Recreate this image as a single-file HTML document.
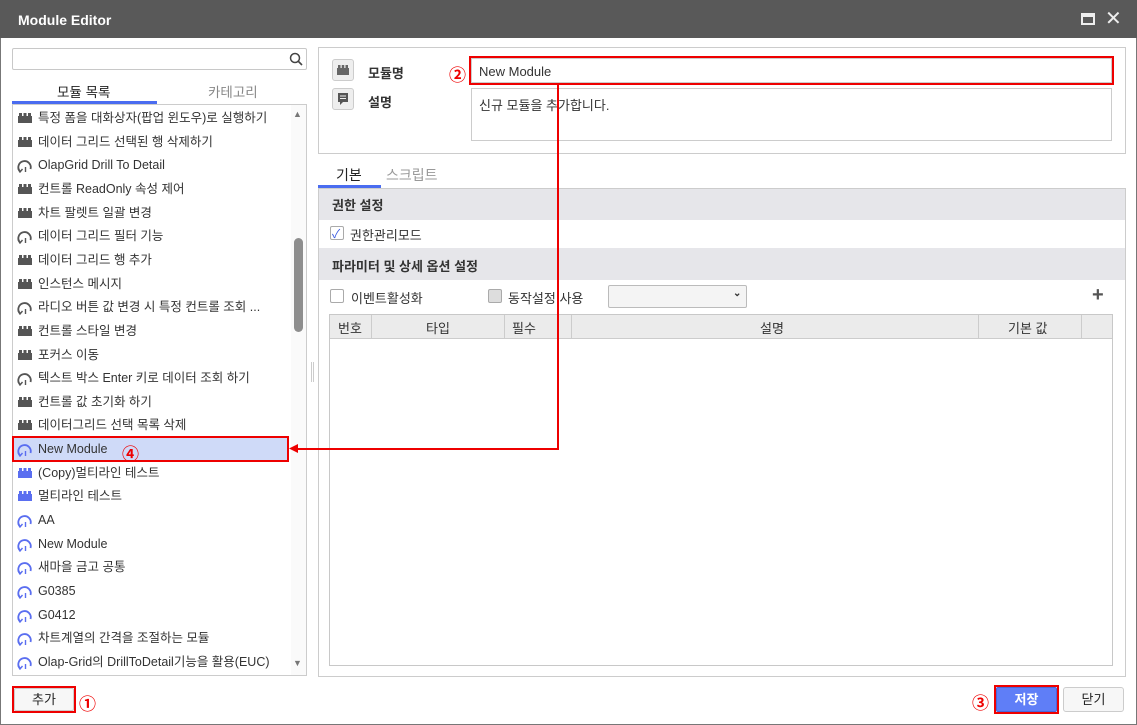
<!DOCTYPE html>
<html><head><meta charset="utf-8"><style>
*{box-sizing:border-box;margin:0;padding:0}
body{width:1137px;height:725px;background:#fff;font-family:"Liberation Sans","Noto Sans CJK KR",sans-serif;font-size:13px;color:#333;position:relative;overflow:hidden}
.a{position:absolute}
.win{left:0;top:0;width:1137px;height:725px;border:1px solid #777;border-top:none}
.title{left:0;top:0;width:1137px;height:38px;background:#595959;color:#fff;font-weight:bold;font-size:14px;padding:12px 0 0 18px}
.row{position:absolute;left:14px;height:23px;width:276px;line-height:23px;white-space:nowrap;font-size:12.5px;color:#333}
.row svg{position:absolute;left:3px;top:5px}
.row span{position:absolute;left:24px}
.red{border:2px solid #e00}
.circ{color:#e00;font-weight:bold;font-size:17px}
.hdr{background:#e6e6ea;font-weight:bold;font-size:13px;color:#333}
.cb{width:14px;height:14px;border:1px solid #aaa;border-radius:2px;background:#fff}
</style></head><body>
<div class="a win"></div>
<div class="a title">Module Editor</div>
<div class="a" style="left:1081px;top:13px;width:14px;height:12px;border:2px solid #eee;border-top-width:4px"></div>
<div class="a" style="left:1105px;top:6px;color:#eee;font-size:20px">✕</div>

<div class="a" style="left:12px;top:48px;width:295px;height:22px;border:1px solid #c8c8c8;border-radius:2px"></div>
<svg class="a" style="left:288px;top:51px" width="16" height="16"><circle cx="7" cy="7" r="4.5" stroke="#444" stroke-width="1.5" fill="none"/><path d="M10 10l4 4" stroke="#444" stroke-width="1.6"/></svg>
<div class="a" style="left:57px;top:81px;font-size:13.5px;color:#222">모듈 목록</div>
<div class="a" style="left:208px;top:81px;font-size:13.5px;color:#888">카테고리</div>
<div class="a" style="left:12px;top:101px;width:145px;height:3px;background:#4a6cf0"></div>
<div class="a" style="left:12px;top:104px;width:295px;height:572px;border:1px solid #ccc"></div>
<div class="a" style="left:291px;top:105px;width:15px;height:570px;background:#fafafa"></div>
<div class="a" style="left:294px;top:238px;width:9px;height:94px;background:#8e8e8e;border-radius:5px"></div>
<div class="a" style="left:293px;top:109px;color:#777;font-size:9px">▲</div>
<div class="a" style="left:293px;top:658px;color:#777;font-size:9px">▼</div>
<div class="a" style="left:311px;top:362px;width:3px;height:20px;border-left:1px solid #ccc;border-right:1px solid #ccc"></div>

<div class="a red" style="left:12px;top:436px;width:277px;height:26px;background:#cfdaf8"></div>
<div id="list"></div>

<div class="a red" style="left:12px;top:686px;width:64px;height:27px"></div>
<div class="a" style="left:14px;top:688px;width:60px;height:23px;border:1px solid #ccc;border-radius:2px;background:#f7f7f7;text-align:center;line-height:21px;font-size:13px;color:#222">추가</div>
<div class="a circ" style="left:79px;top:690px">①</div>

<div class="a" style="left:318px;top:47px;width:808px;height:107px;border:1px solid #ccc"></div>
<div class="a" style="left:332px;top:59px;width:22px;height:22px;background:#eee;border:1px solid #ccc;border-radius:3px"></div>
<svg class="a" style="left:336px;top:64px" width="14" height="11"><path d="M1 4h12v7H1zM2 1h2.5v3H2zM5.75 1h2.5v3h-2.5zM9.5 1h2.5v3H9.5z" fill="#666"/></svg>
<div class="a" style="left:332px;top:88px;width:22px;height:22px;background:#eee;border:1px solid #ccc;border-radius:3px"></div>
<svg class="a" style="left:337px;top:92px" width="12" height="13"><path d="M1 1h10v9H6l-3 3v-3H1z" fill="#555"/><path d="M3 4h6M3 6.5h6" stroke="#eee" stroke-width="1"/></svg>
<div class="a" style="left:368px;top:63px;font-weight:bold;font-size:13px">모듈명</div>
<div class="a" style="left:368px;top:92px;font-weight:bold;font-size:13px">설명</div>
<div class="a circ" style="left:449px;top:61px">②</div>
<div class="a red" style="left:469px;top:56px;width:645px;height:29px"></div>
<div class="a" style="left:471px;top:58px;width:641px;height:25px;border:1px solid #ccc;padding:5px 7px;font-size:13px">New Module</div>
<div class="a" style="left:471px;top:88px;width:641px;height:53px;border:1px solid #ccc;padding:6px 7px;font-size:13px">신규 모듈을 추가합니다.</div>

<div class="a" style="left:336px;top:165px;font-size:14px;color:#222">기본</div>
<div class="a" style="left:386px;top:165px;font-size:14px;color:#999">스크립트</div>
<div class="a" style="left:318px;top:185px;width:63px;height:3px;background:#4a6cf0"></div>
<div class="a" style="left:318px;top:188px;width:808px;height:489px;border:1px solid #ccc"></div>
<div class="a hdr" style="left:319px;top:189px;width:806px;height:31px;padding:6px 0 0 13px">권한 설정</div>
<div class="a cb" style="left:330px;top:226px"></div>
<div class="a" style="left:332px;top:225px;color:#3a5be0;font-size:12px">✓</div>
<div class="a" style="left:350px;top:225px;font-size:13px">권한관리모드</div>
<div class="a hdr" style="left:319px;top:248px;width:806px;height:32px;padding:8px 0 0 13px">파라미터 및 상세 옵션 설정</div>
<div class="a cb" style="left:330px;top:289px"></div>
<div class="a" style="left:351px;top:288px;font-size:13px">이벤트활성화</div>
<div class="a cb" style="left:488px;top:289px;background:#ddd"></div>
<div class="a" style="left:508px;top:288px;font-size:13px">동작설정 사용</div>
<div class="a" style="left:608px;top:285px;width:139px;height:23px;border:1px solid #bbb;border-radius:2px;background:#f4f4f4"></div>
<div class="a" style="left:733px;top:288px;font-size:10px;font-weight:bold">⌄</div>
<div class="a" style="left:1092px;top:284px;font-size:20px;color:#555;font-weight:bold">+</div>
<div class="a" style="left:329px;top:314px;width:784px;height:352px;border:1px solid #c8c8c8"></div>
<div class="a" style="left:330px;top:315px;width:782px;height:24px;background:#ebebeb;border-bottom:1px solid #ccc"></div>
<div class="a" style="left:371px;top:315px;width:1px;height:24px;background:#ccc"></div>
<div class="a" style="left:504px;top:315px;width:1px;height:24px;background:#ccc"></div>
<div class="a" style="left:571px;top:315px;width:1px;height:24px;background:#ccc"></div>
<div class="a" style="left:978px;top:315px;width:1px;height:24px;background:#ccc"></div>
<div class="a" style="left:1081px;top:315px;width:1px;height:24px;background:#ccc"></div>
<div class="a" style="left:338px;top:318px;font-size:13px">번호</div>
<div class="a" style="left:426px;top:318px;font-size:13px">타입</div>
<div class="a" style="left:512px;top:318px;font-size:13px">필수</div>
<div class="a" style="left:760px;top:318px;font-size:13px">설명</div>
<div class="a" style="left:1008px;top:318px;font-size:13px">기본 값</div>

<div class="a" style="left:557px;top:85px;width:2px;height:365px;background:#e00"></div>
<div class="a" style="left:296px;top:448px;width:263px;height:2px;background:#e00"></div>
<svg class="a" style="left:289px;top:444px" width="9" height="9"><path d="M0 4.5L9 0v9z" fill="#e00"/></svg>
<div class="a circ" style="left:122px;top:440px">④</div>

<div class="a circ" style="left:972px;top:689px">③</div>
<div class="a red" style="left:994px;top:685px;width:65px;height:29px"></div>
<div class="a" style="left:996px;top:687px;width:61px;height:25px;background:#5f7ef7;border:1px solid #4a66d8;border-radius:2px;color:#fff;text-align:center;line-height:23px;font-weight:bold;font-size:13px">저장</div>
<div class="a" style="left:1063px;top:687px;width:61px;height:25px;background:#f7f7f7;border:1px solid #ccc;border-radius:3px;text-align:center;line-height:23px;font-size:13px;color:#222">닫기</div>

<script>
var B='<svg width="16" height="12"><path d="M1 4h14v7H1zM2 1h3v3H2zM6.5 1h3v3h-3zM11 1h3v3h-3z" fill="C"/></svg>';
var R='<svg width="16" height="14"><path d="M3 12.5A6.2 6.2 0 1 1 13.5 10" stroke="C" stroke-width="1.8" fill="none"/><path d="M1 9.5l2 3.5 2.5-3" stroke="C" stroke-width="1.4" fill="none"/><path d="M8.5 8v5" stroke="C" stroke-width="1.4"/></svg>';
var items=[["b","특정 폼을 대화상자(팝업 윈도우)로 실행하기"],["b","데이터 그리드 선택된 행 삭제하기"],["r","OlapGrid Drill To Detail"],["b","컨트롤 ReadOnly 속성 제어"],["b","차트 팔렛트 일괄 변경"],["r","데이터 그리드 필터 기능"],["b","데이터 그리드 행 추가"],["b","인스턴스 메시지"],["r","라디오 버튼 값 변경 시 특정 컨트롤 조회 ..."],["b","컨트롤 스타일 변경"],["b","포커스 이동"],["r","텍스트 박스 Enter 키로 데이터 조회 하기"],["b","컨트롤 값 초기화 하기"],["b","데이터그리드 선택 목록 삭제"],["R","New Module"],["B","(Copy)멀티라인 테스트"],["B","멀티라인 테스트"],["R","AA"],["R","New Module"],["R","새마을 금고 공통"],["R","G0385"],["R","G0412"],["R","차트계열의 간격을 조절하는 모듈"],["R","Olap-Grid의 DrillToDetail기능을 활용(EUC)"]];
var h='';items.forEach(function(it,i){var t=it[0],c=(t=='b'||t=='r')?'#555':'#5a6ef0';var ic=(t.toLowerCase()=='b'?B:R).replace(/C/g,c);
h+='<div class="row" style="top:'+(107+i*23.65)+'px">'+ic+'<span>'+it[1]+'</span></div>';});
document.getElementById('list').innerHTML=h;
</script>
</body></html>
